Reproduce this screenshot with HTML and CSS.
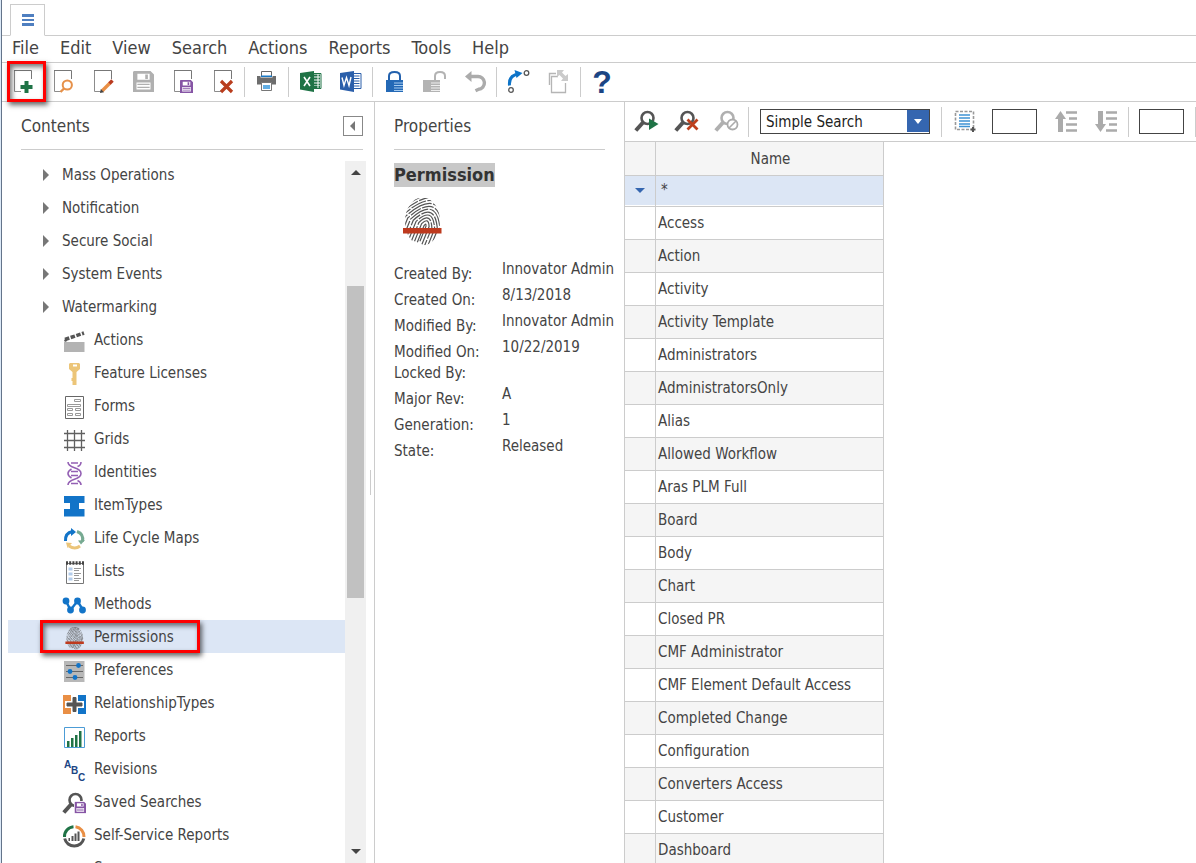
FILE: index.html
```html
<!DOCTYPE html>
<html lang="en">
<head>
<meta charset="utf-8">
<title>Permissions</title>
<link rel="stylesheet" href="styles.css">
</head>
<body>
<svg class="sprite" aria-hidden="true">
  <symbol id="page" viewBox="0 0 24 24"><path d="M11 21.500H4.500V.5" fill="none" stroke="#8c8c8c"/><path d="M4 .5H21.500V9" fill="none" stroke="#777"/></symbol>
  <symbol id="disk" viewBox="0 0 24 24"><path fill-rule="evenodd" d="M1 0H20L24 4V24H0V1ZM5 3V10H19V3ZM4 13V21H20V13Z" fill="currentColor"/><path d="M14 4h3v5h-3zM5 14.500h14v1.500H5zM5 18h14v1.500H5z" fill="currentColor"/></symbol>
  <symbol id="glass" viewBox="0 0 24 24"><circle cx="13.500" cy="8" r="6" fill="none" stroke="currentColor" stroke-width="2.600"/><path d="M9 12.500 1.800 20.500" stroke="currentColor" stroke-width="4"/></symbol>
  <symbol id="finger" viewBox="0 0 40 48">
    <clipPath id="tip"><ellipse cx="20.500" cy="23.500" rx="17.500" ry="24"/></clipPath>
    <g clip-path="url(#tip)"><g fill="none" stroke="#555" stroke-width="1.200" transform="rotate(22 23 28)">
      <path d="M22 46V28q1-4 2 0V44"/><path d="M19 46V27q4-9 8 0V46"/><path d="M16 48V27q7-15 14 0V46" stroke-dasharray="17 1.500"/><path d="M13 48V27q10-21 20 0V46" stroke-dasharray="23 1.500"/><path d="M10 48V27q13-27 26 0V46" stroke-dasharray="14 1.500"/><path d="M7 50V27q16-33 32 0V46" stroke-dasharray="21 1.500"/><path d="M4 50V27q19-39 38 0V46" stroke-dasharray="12 1.500"/><path d="M1 50V27q22-45 44 0V46" stroke-dasharray="26 1.500"/><path d="M-2 50V27q25-51 50 0V46" stroke-dasharray="16 1.500"/><path d="M-5 50V27q28-57 56 0V46" stroke-dasharray="22 1.500"/><path d="M-8 50V27q31-63 62 0V46"/><path d="M-11 50V27q34-69 68 0V46"/>
    </g></g>
    <path d="M1 30H39.500V35.500H1Z" fill="#be3a1e"/>
  </symbol>
</svg>
<div class="app">
  <header>
    <div class="tabs"><button class="tab" aria-label="Main menu"><svg class="burger" viewBox="0 0 12 12"><path d="M0 0h12v3H0zM0 5h12v2H0zM0 9h12v3H0z" fill="#4f7fc0"/></svg></button></div>
    <nav class="menu"><button>File</button><button>Edit</button><button>View</button><button>Search</button><button>Actions</button><button>Reports</button><button>Tools</button><button>Help</button></nav>
    <div class="toolbar">
      <button class="tool marked" aria-label="New"><svg viewBox="0 0 24 24"><use href="#page"/><path d="M14.500 11h4v4h4v4h-4v4h-4v-4h-4v-4h4z" fill="#1f7346"/></svg></button>
      <button class="tool" aria-label="Find"><svg viewBox="0 0 24 24"><use href="#page"/><path d="M10 16 17 9h6v12H10z" fill="#fff"/><circle cx="17.300" cy="15" r="4.600" fill="#fff" stroke="#e6914a" stroke-width="2"/><path d="m14 18.500-3.500 3.500" stroke="#e6914a" stroke-width="2.400"/></svg></button>
      <button class="tool" aria-label="Edit item"><svg viewBox="0 0 24 24"><use href="#page"/><path d="m12 21 8-8" stroke="#e98f45" stroke-width="3.400"/><path d="m19.500 13.500 3-3" stroke="#b93a20" stroke-width="3.400"/><path d="m10 23 .8-4 3.200 3.200z" fill="#444"/></svg></button>
      <button class="tool gray" aria-label="Save"><svg viewBox="0 0 24 24"><use href="#disk" x="3" y="1" width="21" height="21"/></svg></button>
      <button class="tool purple" aria-label="Save and close"><svg viewBox="0 0 24 24"><use href="#page"/><use href="#disk" x="10" y="10" width="13" height="13"/></svg></button>
      <button class="tool" aria-label="Delete"><svg viewBox="0 0 24 24"><use href="#page"/><path d="m11 11 11 11M22 11 11 22" stroke="#b93d1e" stroke-width="3.200"/></svg></button>
      <i class="sep"></i>
      <button class="tool" aria-label="Print"><svg viewBox="0 0 24 24"><path d="M7.500 7V1.500h10V7" fill="#fff" stroke="#666"/><path d="M3 6H6.500V7.500H18.500V6H22V14.500H3Z" fill="#6d6d6d"/><path d="M7 5.500H18V7H7z" fill="#1878c6"/><path d="M7.500 12.500h10v8h-10z" fill="#fff" stroke="#777"/><path d="M9 15h7v4H9z" fill="#62aee4"/></svg></button>
      <i class="sep"></i>
      <button class="tool" aria-label="Export to Excel"><svg viewBox="0 0 24 24"><path d="M15 3.500h8v15h-8z" fill="#fff" stroke="#1f7346"/><path d="M16 5.500h6M16 8.500h6M16 11.500h6M16 14.500h6M16 17h6" stroke="#1f7346" stroke-width="1.800" stroke-dasharray="3.500 1"/><path d="M2 3 16 1V22L2 19.500Z" fill="#1f7346"/><path d="m6 7 6 9M12 7l-6 9" stroke="#fff" stroke-width="1.600"/></svg></button>
      <button class="tool" aria-label="Export to Word"><svg viewBox="0 0 24 24"><path d="M15 3.500h8v15h-8z" fill="#fff" stroke="#2b5faa"/><path d="M16 6h5.500M16 8.500h5.500M16 11h5.500M16 13.500h5.500M16 16h5.500" stroke="#2b5faa"/><path d="M2 3 16 1V22L2 19.500Z" fill="#2b5faa"/><path d="m4 7.500 2 8 2.500-8 2.500 8 2-8.500" fill="none" stroke="#fff" stroke-width="1.400"/></svg></button>
      <i class="sep"></i>
      <button class="tool" aria-label="Lock"><svg viewBox="0 0 24 24"><path d="M7 11V6q0-4 5.500-4T18 6v5" fill="none" stroke="#2361ad" stroke-width="2"/><path d="M4 10H21V22H4Z" fill="#2469b6"/><path d="M12 13h9M12 15.500h9M12 18h9M12 20.500h9" stroke="#a5cbef"/></svg></button>
      <button class="tool" aria-label="Unlock"><svg viewBox="0 0 24 24"><path d="M13 10V6q0-4 5-4t5 4v3" fill="none" stroke="#b3b3b3" stroke-width="2"/><path d="M1 10H18V22H1Z" fill="#b3b3b3"/><path d="M9 13h9M9 15.500h9M9 18h9M9 20.500h9" stroke="#eee"/></svg></button>
      <button class="tool" aria-label="Undo"><svg viewBox="0 0 24 24"><path d="M7 6.500h8.500a6 6 0 0 1 1 12.800l-3 1.500" fill="none" stroke="#ababab" stroke-width="3.400"/><path d="m3 6.500 6.500-5.500v11z" fill="#ababab"/></svg></button>
      <i class="sep"></i>
      <button class="tool" aria-label="Promote"><svg viewBox="0 0 24 24"><path d="M3.500 15.500Q2.500 5 13 4" fill="none" stroke="#0e74c8" stroke-width="3"/><path d="m8.500 0 8 3-6 5z" fill="#0e74c8"/><circle cx="20.500" cy="3" r="2.300" fill="none" stroke="#555" stroke-width="1.300"/><circle cx="5" cy="20" r="2.300" fill="none" stroke="#555" stroke-width="1.300"/></svg></button>
      <button class="tool" aria-label="Copy version"><svg viewBox="0 0 24 24"><path d="M3.500 15V3.500H10" fill="none" stroke="#b5b5b5" stroke-width="1.400"/><path d="M12 6.500H5.500v16h14V13" fill="none" stroke="#b5b5b5" stroke-width="1.300"/><path d="m11 0h7l-2 2.500 3.500 3.500 2.500-2v7h-7l2-2.500-3.500-3.500-2.500 2z" fill="#cacaca"/></svg></button>
      <i class="sep"></i>
      <button class="tool help" aria-label="Help">?</button>
    </div>
  </header>
  <div class="body">
    <aside class="contents">
      <div class="panel-head"><h2>Contents</h2><button class="collapse" aria-label="Collapse"><svg viewBox="0 0 8 10"><path d="M1 5 6 0V10z" fill="#777"/></svg></button></div>
      <div class="tree-wrap">
        <ul class="tree">
          <li class="group">Mass Operations</li><li class="group">Notification</li><li class="group">Secure Social</li><li class="group">System Events</li><li class="group">Watermarking</li>
          <li><svg viewBox="0 0 24 24"><path d="M2 12H22.500V22H2Z" fill="#b3b3b3"/><path d="M3 9.500 22 3" stroke="#555" stroke-width="3.600" stroke-dasharray="4.500 1.500"/><circle cx="3.500" cy="10.500" r="1.300" fill="#555"/></svg>Actions</li>
          <li><svg viewBox="0 0 24 24"><path fill-rule="evenodd" d="M8 0h9l1 1v5l-3.500 3v13h-4v-4h-1v-3h1V9L7 6V1zM11 1.500v2h4v-2z" fill="#ecc578"/></svg>Feature Licenses</li>
          <li><svg viewBox="0 0 24 24"><path d="M3.500.5h18v22h-18z" fill="#fff" stroke="#666"/><path d="M12.500 3.500h6v2h-6zM5.500 8.500h13v2h-13zM5.500 12.500h5v2h-5zM13.500 12.500h5v2h-5zM5.500 17.500h5v2h-5zM13.500 17.500h5v2h-5z" fill="none" stroke="#999"/></svg>Forms</li>
          <li><svg viewBox="0 0 24 24"><path d="M5.500 1v21M12.500 1v21M19.500 1v21M2 4.500h21M2 11.500h21M2 18.500h21" stroke="#606060" stroke-width="1.300"/></svg>Grids</li>
          <li><svg viewBox="0 0 24 24"><path d="M6 0q0 3.500 6.500 5.700T19 11.500t-6.500 5.700T6 23M19 0q0 3.500-3.500 4.500M9.500 7Q6 9 6 11.500t3.500 4.500M15.500 18.500Q19 20 19 23M9 1h7M9 9.500h7M9 13.500h7M9 21.500h7" fill="none" stroke="#9460b4" stroke-width="1.600"/></svg>Identities</li>
          <li><svg viewBox="0 0 24 24"><path d="M2 1H22.500V8H17V14H22.500V21.500H2V14H8V8H2Z" fill="#1274c8"/></svg>ItemTypes</li>
          <li><svg viewBox="0 0 24 24"><path d="M3.500 13Q3 5 10.500 3.500" fill="none" stroke="#1274c8" stroke-width="3"/><path d="m9 0 5 4-5 4z" fill="#1274c8"/><path d="M15 3.500q7 2.500 5.500 10" fill="none" stroke="#77aa92" stroke-width="3"/><path d="m16 12.500 7-.5-4 4.500z" fill="#77aa92"/><path d="M18 18q-5 4-11 0" fill="none" stroke="#ebc579" stroke-width="3"/><path d="m4 14.500 6 .5-4.500 5z" fill="#ebc579"/></svg>Life Cycle Maps</li>
          <li><svg viewBox="0 0 24 24"><path d="M4.500 2.500h17v20h-17z" fill="#fff" stroke="#777"/><path d="M4 2h18" stroke="#444" stroke-width="3.500" stroke-dasharray="2 1.200"/><path d="M6.500 8h4M6.500 13h4M6.500 18h4" stroke="#b4cdec" stroke-width="3"/><path d="M12 7.500h7M12 9.500h5M12 12.500h7M12 14.500h5M12 17.500h7M12 19.500h5" stroke="#999"/></svg>Lists</li>
          <li><svg viewBox="0 0 24 24"><path d="M4 7l4.500 9 7-9L21 16" fill="none" stroke="#1274c8" stroke-width="2.400"/><g fill="#1274c8"><circle cx="4" cy="7" r="3.400"/><circle cx="8.500" cy="16" r="3.400"/><circle cx="15.500" cy="7" r="3.400"/><circle cx="20.500" cy="16" r="3.400"/></g></svg>Methods</li>
          <li class="selected"><svg viewBox="0 0 24 24"><use href="#finger" x="2.500" y="0" width="20" height="23"/></svg>Permissions</li>
          <li><svg viewBox="0 0 24 24"><path d="M2 1H22.500V22H2Z" fill="#b8b8b8"/><path d="M4 5.500h17M4 11.500h17M4 17.500h17" stroke="#666"/><g fill="#1274c8"><circle cx="16.500" cy="5.500" r="2.400"/><circle cx="8" cy="11.500" r="2.400"/><circle cx="13" cy="17.500" r="2.400"/></g></svg>Preferences</li>
          <li><svg viewBox="0 0 24 24"><path d="M1 2h11v19H1z" fill="#e98f45"/><path d="M13 2h11v19H13z" fill="#1274c8"/><path d="M9 2h7v19H9zM3 8h19v7H3z" fill="#fff"/><path d="M11 4.500h3v5.500h6v3h-6v5.500h-3V13H5v-3h6z" fill="#555" stroke="#555"/></svg>RelationshipTypes</li>
          <li><svg viewBox="0 0 24 24"><path d="M2.500 1.500h20v20h-20z" fill="#fff" stroke="#4c9cd6"/><path d="M5 15h2.500v6H5zM9 12h2.500v9H9zM13 9h2.500v12H13zM17 5h2.500v16H17z" fill="#1f7346"/></svg>Reports</li>
          <li><svg class="abc" viewBox="0 0 24 24"><text x="2" y="9">A</text><text x="9" y="15">B</text><text x="16" y="22">C</text></svg>Revisions</li>
          <li class="dark"><svg viewBox="0 0 24 24"><use href="#glass"/><path d="M12 9h12v13H12z" fill="#fff"/><g class="purple"><use href="#disk" x="12.500" y="9.500" width="11.500" height="12"/></g></svg>Saved Searches</li>
          <li><svg viewBox="0 0 24 24"><g fill="none" stroke-width="3"><path d="M2.500 12A9.800 9.800 0 0 1 11.500 1.700" stroke="#1f7346"/><path d="M13.500 1.700A9.800 9.800 0 0 1 22 12" stroke="#e98f45"/><path d="M2.700 13.500A9.800 9.800 0 0 0 21.800 13.500" stroke="#555"/></g><path d="M6.500 13H8v3H6.500zM9.500 11h2v5h-2zM12.500 8.500h2V16h-2zM15.500 6.500h2V16h-2z" fill="#555"/></svg>Self-Service Reports</li>
          <li><svg viewBox="0 0 24 24"></svg>Sequences</li>
        </ul>
        <div class="scrollbar"><i class="up"></i><i class="thumb"></i><i class="down"></i></div>
        <i class="grip"></i>
      </div>
    </aside>
    <section class="properties">
      <div class="panel-head"><h2>Properties</h2></div>
      <h3><mark>Permission</mark></h3>
      <svg class="big-finger" viewBox="0 0 40 48"><use href="#finger"/></svg>
      <dl>
        <div><dt>Created By:</dt><dd>Innovator Admin</dd></div>
        <div><dt>Created On:</dt><dd>8/13/2018</dd></div>
        <div><dt>Modified By:</dt><dd>Innovator Admin</dd></div>
        <div><dt>Modified On:</dt><dd>10/22/2019</dd></div>
        <div class="empty"><dt>Locked By:</dt><dd></dd></div>
        <div><dt>Major Rev:</dt><dd>A</dd></div>
        <div><dt>Generation:</dt><dd>1</dd></div>
        <div><dt>State:</dt><dd>Released</dd></div>
      </dl>
    </section>
    <main>
      <div class="toolbar search-bar">
        <button class="tool dark" aria-label="Run search"><svg viewBox="0 0 24 24"><use href="#glass"/><path d="M15 8.500 24.500 14 15 20z" fill="#1f7346"/></svg></button>
        <button class="tool dark" aria-label="Clear search"><svg viewBox="0 0 24 24"><use href="#glass"/><path d="m13.500 9.500 10 10M23.500 9.500l-10 10" stroke="#be3f1c" stroke-width="2.800"/></svg></button>
        <button class="tool gray" aria-label="Disable search"><svg viewBox="0 0 24 24"><use href="#glass"/><circle cx="18.500" cy="14.500" r="5" fill="#fff" stroke="#ababab" stroke-width="1.800"/><path d="m15 18 7-7" stroke="#ababab" stroke-width="1.600"/></svg></button>
        <i class="sep"></i>
        <span class="combo"><select aria-label="Search mode"><option>Simple Search</option></select></span>
        <i class="sep"></i>
        <button class="tool" aria-label="Select all"><svg viewBox="0 0 24 24"><path d="M2.500 1.500h18v18h-18z" fill="none" stroke="#999" stroke-width="1.600" stroke-dasharray="3 1.500"/><path d="M6 5h11M6 8h11M6 11h11M6 14h11M6 16.500h11" stroke="#3f93d3" stroke-width="1.300"/><path d="M20 17v5M17.500 19.500h5" stroke="#555" stroke-width="2"/></svg></button>
        <input class="num" aria-label="Page size">
        <button class="tool" aria-label="Sort ascending"><svg viewBox="0 0 24 24"><path d="m6.500 1 5.500 8H9v13H4V9H1z" fill="#ababab"/><path d="M12 2.500h11M15 8.500h8M12 14.500h11M12 20.500h11" stroke="#ababab" stroke-width="2.400"/></svg></button>
        <button class="tool" aria-label="Sort descending"><svg viewBox="0 0 24 24"><path d="m6.500 22 5.500-8H9V1H4v13H1z" fill="#ababab"/><path d="M12 2.500h11M12 8.500h11M15 14.500h8M12 20.500h11" stroke="#ababab" stroke-width="2.400"/></svg></button>
        <i class="sep"></i>
        <input class="num" aria-label="Page">
        <i class="sep"></i>
      </div>
      <table>
        <thead><tr><th></th><th>Name</th></tr></thead>
        <tbody>
          <tr class="filter"><td><i class="caret"></i></td><td>*</td></tr>
          <tr><td></td><td>Access</td></tr><tr><td></td><td>Action</td></tr><tr><td></td><td>Activity</td></tr><tr><td></td><td>Activity Template</td></tr><tr><td></td><td>Administrators</td></tr><tr><td></td><td>AdministratorsOnly</td></tr><tr><td></td><td>Alias</td></tr><tr><td></td><td>Allowed Workflow</td></tr><tr><td></td><td>Aras PLM Full</td></tr><tr><td></td><td>Board</td></tr><tr><td></td><td>Body</td></tr><tr><td></td><td>Chart</td></tr><tr><td></td><td>Closed PR</td></tr><tr><td></td><td>CMF Administrator</td></tr><tr><td></td><td>CMF Element Default Access</td></tr><tr><td></td><td>Completed Change</td></tr><tr><td></td><td>Configuration</td></tr><tr><td></td><td>Converters Access</td></tr><tr><td></td><td>Customer</td></tr><tr><td></td><td>Dashboard</td></tr>
        </tbody>
      </table>
    </main>
  </div>
</div>
</body>
</html>
```
FILE: styles.css
```css
*, ::before, ::after { box-sizing: border-box; }
body { margin: 0; padding-left: 1px; background: #dce9f7; color: #444; font: 15px/18px "DejaVu Sans Condensed", "Noto Sans", sans-serif; }
button, input, select { font: inherit; color: inherit; margin: 0; padding: 0; border: 0; background: none; }
h2, h3, dl, dd, ul { margin: 0; padding: 0; }
svg { display: block; overflow: visible; flex: none; }
.sprite { position: absolute; width: 0; height: 0; }
.app { height: 100vh; overflow: hidden; display: flex; flex-direction: column; background: #fff; border-left: 1px solid #64748a; }
.tabs { height: 36px; padding: 4px 0 0 8px; border-bottom: 1px solid #ccc; }
.tab { display: flex; justify-content: center; align-items: center; width: 35px; height: 32px; border: 1px solid #ccc; border-bottom-color: #fff; background: #fff; }
.burger { width: 12px; height: 12px; }
.menu { display: flex; gap: 21px; height: 27px; padding: 0 0 2px 10px; border-bottom: 1px solid #ccc; font-size: 18px; line-height: 24px; }
.toolbar { display: flex; align-items: center; height: 39px; border-bottom: 1px solid #ccc; }
.tool { position: relative; display: flex; align-items: center; justify-content: center; flex: none; width: 40px; height: 38px; }
.tool svg { width: 24px; height: 24px; }
.sep { flex: none; width: 1px; height: 30px; margin: 0 1px 0 2px; background: #ccc; }
.gray { color: #b0b0b0; }
.purple { color: #8655a5; }
.dark svg { color: #555; }
.dark svg .purple { color: #8655a5; }
.help { color: #1b4584; font: bold 32px "Liberation Sans", sans-serif; }
.abc { fill: #1b4584; font: bold 10px "Liberation Sans", sans-serif; }
.marked::after, .selected::after { content: ""; position: absolute; border: 3px solid #f00; box-shadow: 2px 3px 5px #0009, inset 2px 3px 5px #0008; }
.marked::after { inset: -2px -4px -1px 5px; z-index: 2; }
.body { flex: 1; min-height: 0; display: flex; }
.contents { flex: none; display: flex; flex-direction: column; width: 373px; border-right: 1px solid #ccc; }
.panel-head { display: flex; justify-content: space-between; align-items: center; height: 48px; border-bottom: 1px solid #ccc; margin: 0 11px 0 19px; }
.panel-head h2 { font-size: 17px; line-height: 20px; font-weight: 400; }
.collapse { display: flex; align-items: center; justify-content: center; width: 20px; height: 20px; border: 1px solid #888; }
.collapse svg { width: 8px; height: 10px; }
.tree-wrap { position: relative; flex: 1; min-height: 0; display: flex; padding: 8px 8px 0 6px; }
.tree { flex: 1; list-style: none; overflow: hidden; }
.tree li { display: flex; align-items: center; gap: 8px; height: 33px; padding-left: 54px; }
.tree li svg { width: 24px; height: 24px; margin-top: 5px; }
.tree .group { gap: 13px; padding-left: 35px; }
.group::before { content: ""; border: 6px solid transparent; border-left: 6px solid #777; border-right: 0; }
.tree .selected { position: relative; background: #dce6f5; }
.selected::after { inset: 0 auto 0 32px; width: 160px; }
.scrollbar { display: flex; flex-direction: column; align-items: center; justify-content: space-between; width: 21px; margin-top: 3px; padding: 9px 0; background: #f0f0f0; }
.up, .down, .caret { display: block; width: 0; border: 5px solid transparent; }
.up { border-top: 0; border-bottom-color: #444; }
.down, .caret { border-bottom: 0; border-top-color: #444; }
.thumb { width: 17px; height: 312px; margin-bottom: 140px; background: #c1c1c1; }
.grip { position: absolute; right: 3px; top: 320px; width: 1px; height: 25px; background: #ccc; }
.properties { flex: none; width: 249px; padding-left: 19px; }
.properties .panel-head { margin: 0 19px 0 0; }
h3 { margin-top: 13px; font-size: 18px; line-height: 24px; }
mark { display: inline-block; background: #c8c8c8; color: #333; }
.big-finger { width: 40px; height: 48px; margin: 11px 0 14px 8px; }
dl { display: grid; gap: 3px; }
dl div { display: grid; grid-template-columns: 108px 1fr; height: 23px; white-space: nowrap; }
dl .empty { height: 18px; }
dt { align-self: end; }
main { flex: 1; min-width: 0; overflow: hidden; border-left: 1px solid #ccc; }
.search-bar { height: 40px; }
.search-bar .sep { margin: 0 2px 0 3px; }
.search-bar .tool svg { margin-left: 2px; }
.combo { position: relative; flex: none; width: 170px; height: 25px; margin: 0 8px 0 9px; }
.combo select { appearance: none; width: 100%; height: 100%; padding-left: 5px; border: 1px solid #444; color: #222; background: #fff; }
.combo::before { content: ""; position: absolute; top: 1px; right: 1px; width: 22px; height: 22px; background: #3566b0; pointer-events: none; z-index: 1; }
.combo::after { content: ""; position: absolute; top: 10px; right: 8px; border: 4px solid transparent; border-top: 5px solid #fff; border-bottom: 0; pointer-events: none; z-index: 1; }
.num { flex: none; width: 45px; height: 25px; margin: 0 8px; border: 1px solid #444; background: #fff; }
table { width: 259px; border-collapse: separate; border-spacing: 0; table-layout: fixed; }
th { height: 34px; font-weight: 400; background: #f5f5f5; }
th:first-child { width: 31px; }
th, td { padding: 0 0 0 2px; border-right: 1px solid #ccc; border-bottom: 1px solid #ccc; }
td { height: 33px; white-space: nowrap; }
tbody tr:nth-child(odd) td { background: #f5f5f5; }
tbody tr.filter td { height: 31px; padding-left: 5px; padding-bottom: 2px; background: #dce6f5; box-shadow: inset 0 -1px #fff; }
tbody tr.filter td:first-child { padding-left: 10px; }
.caret { border-top-color: #3566b0; }
```
